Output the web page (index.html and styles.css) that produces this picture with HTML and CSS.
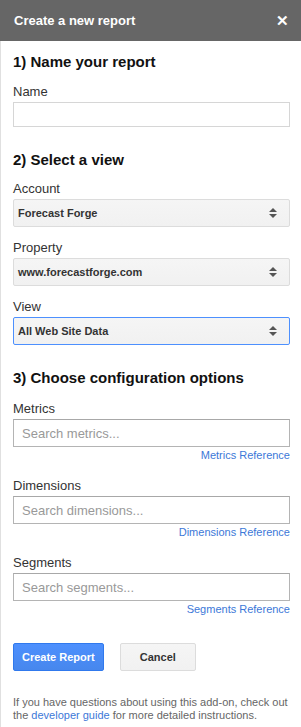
FILE: index.html
```html
<!DOCTYPE html>
<html lang="en">
  <head>
    <meta charset="UTF-8" />
    <title>Create a new report</title>
    <link rel="stylesheet" href="styles.css">
  </head>
  <body>
    <div class="title-bar">
      <span class="title">Create a new report</span>
      <span class="close">&#x2715;</span>
    </div>
    <div class="sidebar">
      <h2 class="first">1) Name your report</h2>
      <div class="field">
        <label>Name</label>
        <input type="text" class="text-input name-input" />
      </div>

      <h2>2) Select a view</h2>
      <div class="field">
        <label>Account</label>
        <div class="select"><span>Forecast Forge</span><span class="arrows"></span></div>
      </div>
      <div class="field">
        <label>Property</label>
        <div class="select"><span>www.forecastforge.com</span><span class="arrows"></span></div>
      </div>
      <div class="field">
        <label>View</label>
        <div class="select focused"><span>All Web Site Data</span><span class="arrows"></span></div>
      </div>

      <h2 class="config">3) Choose configuration options</h2>
      <div class="field with-link">
        <label>Metrics</label>
        <input type="text" class="text-input" placeholder="Search metrics..." />
        <a class="ref-link">Metrics Reference</a>
      </div>
      <div class="field with-link">
        <label>Dimensions</label>
        <input type="text" class="text-input" placeholder="Search dimensions..." />
        <a class="ref-link">Dimensions Reference</a>
      </div>
      <div class="field with-link">
        <label>Segments</label>
        <input type="text" class="text-input" placeholder="Search segments..." />
        <a class="ref-link">Segments Reference</a>
      </div>

      <div class="buttons">
        <button class="action">Create Report</button>
        <button>Cancel</button>
      </div>

      <p class="help">If you have questions about using this add-on, check out the <a>developer guide</a> for more detailed instructions.</p>
    </div>
  </body>
</html>
```

FILE: styles.css
```css
body {
  margin: 0;
  font-family: "Liberation Sans", Arial, sans-serif;
  font-size: 13px;
  color: #222;
  background: white;
}

.title-bar {
  height: 41px;
  background-color: #666;
  color: white;
  display: flex;
  align-items: center;
  justify-content: space-between;
  padding: 0 12px 0 14px;
}

.title {
  font-weight: bold;
  font-size: 13px;
}

.close {
  font-size: 15px;
  font-weight: bold;
}

.sidebar {
  display: flex;
  flex-direction: column;
  border-left: 1px solid #e0e0e0;
  padding: 0 11px 0 12px;
  height: 686px;
  overflow: hidden;
}

h2 {
  font-size: 15px;
  line-height: 17px;
  margin: 11px 0 13px 0;
  color: #111;
}

h2.first {
  margin: 12px 0 14px 0;
}

h2.config {
  margin-bottom: 15px;
}

.field {
  display: flex;
  flex-direction: column;
  margin-bottom: 13px;
}

.field.with-link {
  margin-bottom: 16px;
}

label {
  line-height: 15px;
  margin-bottom: 3px;
  color: #333;
}

.text-input {
  box-sizing: border-box;
  height: 28px;
  border: 1px solid #b4b4b4;
  border-top-color: #a8a8a8;
  margin: 0;
  padding: 1px 8px;
  font-family: inherit;
  font-size: 13px;
}

.text-input.name-input {
  height: 25px;
  border-color: #d6d6d6;
}

.text-input::placeholder {
  color: #999;
}

.select {
  box-sizing: border-box;
  height: 28px;
  display: flex;
  align-items: center;
  justify-content: space-between;
  padding: 0 12px 0 4px;
  border: 1px solid #dcdcdc;
  border-radius: 2px;
  background: linear-gradient(#f5f5f5, #f1f1f1);
  font-weight: bold;
  font-size: 11px;
  color: #333;
}

.select.focused {
  border-color: #4d90fe;
}

.arrows {
  width: 0;
  height: 0;
  position: relative;
  border-left: 4px solid transparent;
  border-right: 4px solid transparent;
  border-bottom: 4px solid #555;
  margin-top: -6px;
}

.arrows::after {
  content: "";
  position: absolute;
  left: -4px;
  top: 6px;
  border-left: 4px solid transparent;
  border-right: 4px solid transparent;
  border-top: 4px solid #555;
}

.ref-link {
  align-self: flex-end;
  color: #3c78d8;
  font-size: 11px;
  line-height: 13px;
  margin-top: 2px;
}

.buttons {
  display: flex;
  gap: 16px;
  margin-top: 11px;
}

button {
  height: 28px;
  padding: 0 19px;
  border: 1px solid #dcdcdc;
  border-radius: 2px;
  background: linear-gradient(#f5f5f5, #f1f1f1);
  font-family: inherit;
  font-size: 11px;
  font-weight: bold;
  color: #333;
}

button.action {
  padding: 0 8px;
  background: linear-gradient(#4d90fe, #4787ed);
  border-color: #3079ed;
  color: white;
}

.help {
  margin: 25px 0 0 0;
  font-size: 11px;
  line-height: 13px;
  color: #666;
}

.help a {
  color: #3c78d8;
}
```
